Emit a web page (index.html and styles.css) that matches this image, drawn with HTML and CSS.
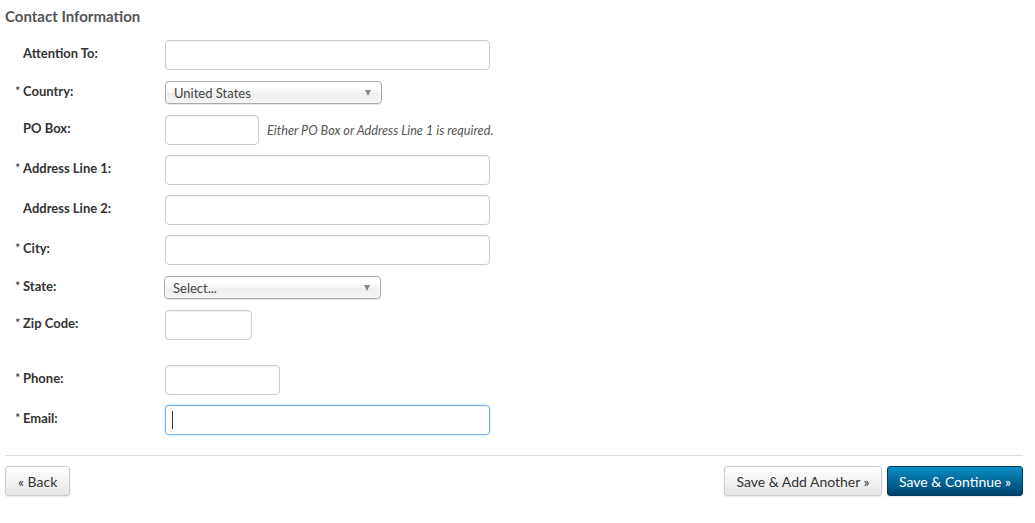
FILE: index.html
```html
<!DOCTYPE html>
<html>
<head>
<meta charset="utf-8">
<link rel="stylesheet" href="styles.css">
</head>
<body>
<div class="page">
  <h2 class="title">Contact Information</h2>
  <div class="form">
    <div class="row">
      <label class="label"><span class="req"></span>Attention To:</label>
      <div class="field"><input class="input w-full" type="text"></div>
    </div>
    <div class="row row-select">
      <label class="label"><span class="req">*</span>Country:</label>
      <div class="field"><div class="select w-select"><span>United States</span><span class="caret-down"></span></div></div>
    </div>
    <div class="row">
      <label class="label"><span class="req"></span>PO Box:</label>
      <div class="field"><input class="input w-po" type="text"><span class="hint">Either PO Box or Address Line 1 is required.</span></div>
    </div>
    <div class="row">
      <label class="label"><span class="req">*</span>Address Line 1:</label>
      <div class="field"><input class="input w-full" type="text"></div>
    </div>
    <div class="row">
      <label class="label"><span class="req"></span>Address Line 2:</label>
      <div class="field"><input class="input w-full" type="text"></div>
    </div>
    <div class="row">
      <label class="label"><span class="req">*</span>City:</label>
      <div class="field"><input class="input w-full" type="text"></div>
    </div>
    <div class="row row-select">
      <label class="label"><span class="req">*</span>State:</label>
      <div class="field"><div class="select w-select state"><span>Select...</span><span class="caret-down"></span></div></div>
    </div>
    <div class="row row-zip">
      <label class="label"><span class="req">*</span>Zip Code:</label>
      <div class="field"><input class="input w-zip" type="text"></div>
    </div>
    <div class="row">
      <label class="label"><span class="req">*</span>Phone:</label>
      <div class="field"><input class="input w-phone" type="text"></div>
    </div>
    <div class="row">
      <label class="label"><span class="req">*</span>Email:</label>
      <div class="field focus-wrap"><input class="input w-full focused" type="text"><span class="text-caret"></span></div>
    </div>
  </div>
  <div class="actions">
    <button class="btn">&laquo; Back</button>
    <div class="right">
      <button class="btn btn-add">Save &amp; Add Another &raquo;</button>
      <button class="btn btn-primary">Save &amp; Continue &raquo;</button>
    </div>
  </div>
</div>
</body>
</html>
```

FILE: styles.css
```css
* { box-sizing: border-box; }
html, body { margin: 0; padding: 0; background: #fff; }
body {
  font-family: Lato, "Open Sans", Arial, sans-serif;
  color: #333;
  font-size: 13px;
}
.page { padding: 0 12px 0 5px; }
.title {
  margin: 0;
  padding-top: 6px;
  font-size: 15px;
  line-height: 20px;
  font-weight: 700;
  color: #555;
  height: 40px;
}
.form { display: flex; flex-direction: column; }
.row {
  display: grid;
  grid-template-columns: 160px 1fr;
  margin-bottom: 10px;
}
.row-select { margin-bottom: 11px; }
.row-zip { margin-bottom: 25px; }
.label {
  display: flex;
  padding-left: 10px;
  padding-top: 5px;
  font-weight: 700;
  font-size: 13px;
  line-height: 16px;
  color: #333;
}
.row-select .label { padding-top: 3px; }
.req {
  display: inline-block;
  width: 8px;
  font-weight: 400;
  font-size: 13px;
}
.field { display: flex; align-items: center; }
.input {
  height: 30px;
  border: 1px solid #ccc;
  border-radius: 4px;
  box-shadow: inset 0 1px 1px rgba(0,0,0,0.06);
  background: #fff;
  font-family: inherit;
  font-size: 13px;
  padding: 0 7px;
  outline: none;
}
.w-full { width: 325px; }
.w-po { width: 94px; }
.w-zip { width: 87px; }
.w-phone { width: 115px; }
.hint {
  margin-left: 8px;
  font-style: italic;
  color: #555;
  font-size: 12.7px;
}
.select {
  margin-top: 1px;
  height: 23px;
  border: 1px solid #aaa;
  border-radius: 4px;
  background: linear-gradient(#fff 20%, #f6f6f6 50%, #eee 52%, #f4f4f4 100%);
  box-shadow: 0 0 3px #fff inset, 0 1px 1px rgba(0,0,0,0.1);
  display: flex;
  align-items: center;
  justify-content: space-between;
  padding: 0 10px 0 8px;
  font-size: 13px;
  color: #444;
}
.w-select { width: 217px; }
.state { margin-left: -1px; }
.caret-down {
  width: 0; height: 0;
  border-left: 3.5px solid transparent;
  border-right: 3.5px solid transparent;
  border-top: 6px solid #888;
}
.focus-wrap { position: relative; }
.focused {
  border-color: #76b4ea;
  box-shadow: inset 0 1px 1px rgba(0,0,0,0.05), 0 0 3px rgba(102,175,233,0.5);
}
.text-caret {
  position: absolute;
  left: 7px;
  top: 6px;
  width: 1px;
  height: 18px;
  background: #333;
}
.actions {
  margin-top: 10px;
  border-top: 1px solid #ddd;
  padding-top: 10px;
  display: flex;
  justify-content: space-between;
  padding-bottom: 27px;
}
.right { display: flex; gap: 5px; }
.btn {
  height: 30px;
  padding: 0 12px;
  font-family: inherit;
  font-size: 14px;
  color: #333;
  border: 1px solid #ccc;
  border-radius: 3px;
  background: linear-gradient(#fff, #e6e6e6);
  box-shadow: 0 1px 2px rgba(0,0,0,0.1);
  cursor: pointer;
}
.btn-add { width: 158px; padding: 0; }
.btn-primary {
  padding: 0 11px;
  color: #fff;
  border-color: #003a5f;
  background: linear-gradient(#0a8ec6, #00426c);
}
```
